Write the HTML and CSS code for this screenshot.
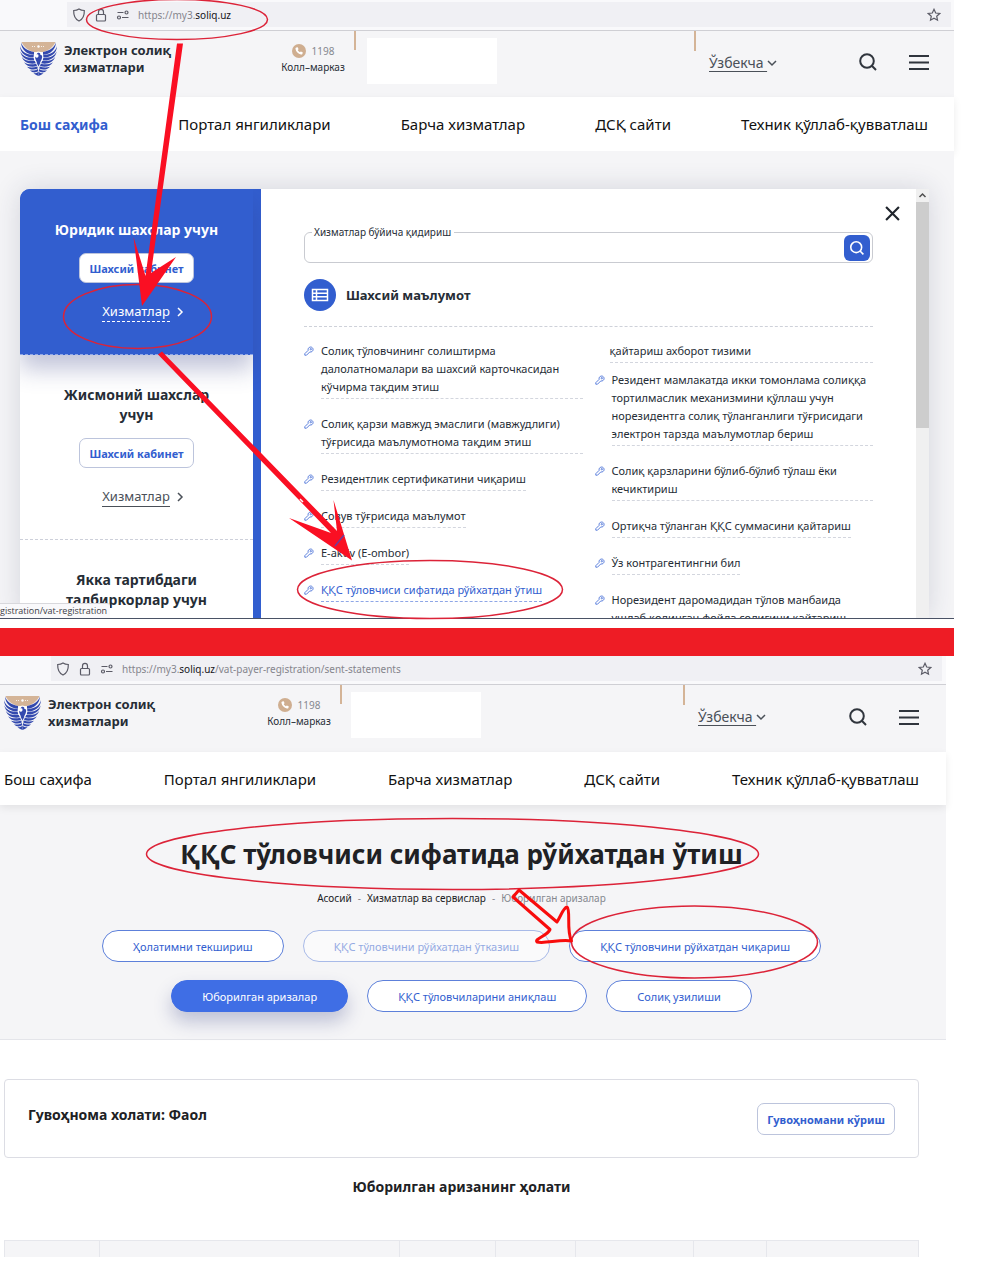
FILE: index.html
```html
<!DOCTYPE html>
<html lang="uz">
<head>
  <meta charset="UTF-8" />
  <meta name="viewport" content="width=device-width, initial-scale=1.0" />
  <title>Электрон солиқ хизматлари</title>
  <link rel="stylesheet" href="styles.css">
</head>
<body>
  <!-- shared icons -->
  <svg class="sprite" aria-hidden="true">
    <symbol id="i-shield" viewBox="0 0 14 14"><path d="M7 1C5.300 2.200 3.500 2.500 1.700 2.500C1.500 7.500 3.300 11.300 7 13C10.700 11.300 12.500 7.500 12.300 2.500C10.500 2.500 8.700 2.200 7 1Z"/></symbol>
    <symbol id="i-lock" viewBox="0 0 14 14"><rect x="2.500" y="6.500" width="9" height="6.500" rx="1"/><path d="M4.500 6.500V4a2.500 2.700 0 0 1 5 0v2.500"/></symbol>
    <symbol id="i-perm" viewBox="0 0 14 14"><path d="M1.500 4.500h6M6 9.500h6.500"/><circle cx="10.500" cy="4.500" r="1.500"/><circle cx="3" cy="9.500" r="1.500"/></symbol>
    <symbol id="i-star" viewBox="0 0 14 14"><path d="M7 1.300l1.700 3.700 4 .5-3 2.700.8 4-3.500-2-3.500 2 .8-4-3-2.700 4-.5z"/></symbol>
    <symbol id="i-search" viewBox="0 0 20 20"><circle cx="9" cy="9" r="6.800"/><path d="M13.800 13.800l4.200 4.200"/></symbol>
    <symbol id="i-key" viewBox="0 0 10 10"><path d="M4.200 4.300a2.500 2.500 0 1 1 1.600 1.600L2.500 9.200H.800V7.700z"/><circle cx="6.800" cy="3.200" r=".7"/></symbol>
    <symbol id="i-phone" viewBox="0 0 14 14"><circle cx="7" cy="7" r="7" fill="#cfae90"/><path d="M4.300 3.500l1.400-.2.900 1.900-.9.900c.4.900 1.300 1.800 2.200 2.200l.9-.9 1.900.9-.2 1.400c-.2.700-.9.900-1.600.8C6.300 10.100 3.900 7.700 3.500 5.100c-.1-.7.100-1.400.8-1.600z" fill="#fff"/></symbol>
    <symbol id="wing" viewBox="0 0 37 34">
      <path d="M1 .500C3 6 8 9 14 10L14 12.700C7 12.500 1.500 8 1 .500Z"/>
      <path d="M0 4C1.500 9.700 6 12.700 13.800 13.100L13.600 15.600C6 15.500 .300 11.500 0 4Z"/>
      <path d="M.300 9.500C2.500 14 7 16 13.700 16L14.300 18.500C7.500 19 1.500 16 .300 9.500Z"/>
      <path d="M1.800 15C5 18.700 9.500 19.500 14.800 18.900L15.800 21.300C9.500 22.500 4 20.500 1.800 15Z"/>
      <path d="M4 20.200C8 22.700 12 22.800 16.200 21.700L17 24C12 25.500 7 24.700 4 20.200Z"/>
      <path d="M7 24.700C11 26 14 25.500 17.300 24.400L17.800 26.600C14 28.300 10 28 7 24.700Z"/>
      <path d="M10 28.300C13 29 15.500 28.300 17.900 27L18.200 29.300C15.500 31 12.500 31 10 28.300Z"/>
      <path d="M13.500 31.300C15.500 31.300 17 30.800 18.500 29.700V34C17 33.500 15.500 32.800 13.500 31.300Z"/>
    </symbol>
    <symbol id="logo" viewBox="0 0 37 34">
      <path d="M1.500 0H35.500C33 5.500 28 9 23 10H14C9 9 4 5.500 1.500 0Z" fill="#d4b497"/>
      <circle cx="18.500" cy="4.500" r="1.200" fill="#fff"/>
      <path d="M12 4.500h4M21 4.500h4" stroke="#fff" stroke-width=".8" stroke-dasharray="1"/>
      <circle cx="18.500" cy="15" r="5.500" fill="#fff"/>
      <g fill="#3349ae">
        <use href="#wing" width="37" height="34"/>
        <use href="#wing" width="37" height="34" transform="matrix(-1 0 0 1 37 0)"/>
        <path d="M17.500 11C19.500 10 20.800 11.500 20.300 13C22 12.500 22.500 14 22 16C21.500 18.500 20 19.500 20 21.500L18.500 24.500L17 21.500C17 19.500 15 18 15 14.500C16 16 17.500 16 18.200 15C18.800 14 18.500 13 18 12.300L16.500 12.500Z"/>
      </g>
    </symbol>
  </svg>

  <section class="screen">
    <div class="address">
      <div class="url">
        <svg class="line"><use href="#i-shield"/></svg>
        <svg class="line"><use href="#i-lock"/></svg>
        <svg class="line"><use href="#i-perm"/></svg>
        <span>https://my3.<b>soliq.uz</b></span>
        <svg class="line star"><use href="#i-star"/></svg>
      </div>
    </div>
    <header class="header">
      <a class="brand" href="#">
        <svg><use href="#logo"/></svg>
        <span>Электрон солиқ<br>хизматлари</span>
      </a>
      <div class="call">
        <span class="phone"><svg><use href="#i-phone"/></svg>1198</span>
        <span>Колл–марказ</span>
      </div>
      <div class="blank"></div>
      <div class="tools">
        <a class="lang" href="#"><u>Ўзбекча&nbsp;</u><svg viewBox="0 0 10 10"><path d="M1 3l4 4 4-4"/></svg></a>
        <button type="button" aria-label="Қидириш"><svg><use href="#i-search"/></svg></button>
        <button type="button" aria-label="Меню"><svg viewBox="0 0 20 20"><path d="M0 4h20M0 10.500h20M0 17h20"/></svg></button>
      </div>
    </header>
    <nav class="nav">
      <a class="current" href="#">Бош саҳифа</a>
      <a href="#">Портал янгиликлари</a>
      <a href="#">Барча хизматлар</a>
      <a href="#">ДСҚ сайти</a>
      <a href="#">Техник қўллаб-қувватлаш</a>
    </nav>
    <main class="stage">
      <div class="services">
        <aside class="side">
          <div class="who active">
            <h2>Юридик шахслар учун</h2>
            <button type="button">Шахсий кабинет</button>
            <a href="#"><span>Хизматлар</span><svg viewBox="0 0 8 10"><path d="M2 1l4 4-4 4"/></svg></a>
          </div>
          <div class="who">
            <h2>Жисмоний шахслар учун</h2>
            <button type="button">Шахсий кабинет</button>
            <a href="#"><span>Хизматлар</span><svg viewBox="0 0 8 10"><path d="M2 1l4 4-4 4"/></svg></a>
          </div>
          <div class="who">
            <h2>Якка тартибдаги тадбиркорлар учун</h2>
          </div>
        </aside>
        <div class="list">
          <button class="close" type="button" aria-label="Ёпиш"><svg viewBox="0 0 14 14"><path d="M1 1l12 12M13 1L1 13"/></svg></button>
          <fieldset class="find">
            <legend><label for="find">Хизматлар бўйича қидириш</label></legend>
            <input id="find" type="text">
            <button type="button" aria-label="Қидириш"><svg><use href="#i-search"/></svg></button>
          </fieldset>
          <h3>
            <svg viewBox="0 0 32 32"><circle cx="16" cy="16" r="16" fill="#325ecf"/><path d="M8.500 10.500h15v11h-15zM8.500 14.200h15M8.500 17.800h15M12.500 10.500v11" fill="none" stroke="#fff" stroke-width="1.500"/></svg>
            Шахсий маълумот
          </h3>
          <div class="cols">
            <ul>
              <li><svg><use href="#i-key"/></svg><a href="#">Солиқ тўловчининг солиштирма далолатномалари ва шахсий карточкасидан кўчирма тақдим этиш</a></li>
              <li><svg><use href="#i-key"/></svg><a href="#">Солиқ қарзи мавжуд эмаслиги (мавжудлиги) тўғрисида маълумотнома тақдим этиш</a></li>
              <li><svg><use href="#i-key"/></svg><a href="#">Резидентлик сертификатини чиқариш</a></li>
              <li><svg><use href="#i-key"/></svg><a href="#">Совув тўғрисида маълумот</a></li>
              <li><svg><use href="#i-key"/></svg><a href="#">E-aktiv (E-ombor)</a></li>
              <li><svg><use href="#i-key"/></svg><a class="hover" href="#">ҚҚС тўловчиси сифатида рўйхатдан ўтиш</a></li>
            </ul>
            <ul>
              <li class="rest"><a href="#">қайтариш ахборот тизими</a></li>
              <li><svg><use href="#i-key"/></svg><a href="#">Резидент мамлакатда икки томонлама солиққа тортилмаслик механизмини қўллаш учун норезидентга солиқ тўланганлиги тўғрисидаги электрон тарзда маълумотлар бериш</a></li>
              <li><svg><use href="#i-key"/></svg><a href="#">Солиқ қарзларини бўлиб-бўлиб тўлаш ёки кечиктириш</a></li>
              <li><svg><use href="#i-key"/></svg><a href="#">Ортиқча тўланган ҚҚС суммасини қайтариш</a></li>
              <li><svg><use href="#i-key"/></svg><a href="#">Ўз контрагентингни бил</a></li>
              <li><svg><use href="#i-key"/></svg><a href="#">Норезидент даромадидан тўлов манбаида ушлаб қолинган фойда солиғини қайтариш</a></li>
            </ul>
          </div>
        </div>
        <div class="scroll"><svg viewBox="0 0 13 13"><path d="M3.500 8l3-3 3 3"/></svg><i></i></div>
      </div>
      <div class="status">gistration/vat-registration</div>
    </main>
  </section>

  <div class="divider"></div>

  <section class="screen second">
    <div class="address">
      <div class="url">
        <svg class="line"><use href="#i-shield"/></svg>
        <svg class="line"><use href="#i-lock"/></svg>
        <svg class="line"><use href="#i-perm"/></svg>
        <span>https://my3.<b>soliq.uz</b>/vat-payer-registration/sent-statements</span>
        <svg class="line star"><use href="#i-star"/></svg>
      </div>
    </div>
    <header class="header">
      <a class="brand" href="#">
        <svg><use href="#logo"/></svg>
        <span>Электрон солиқ<br>хизматлари</span>
      </a>
      <div class="call">
        <span class="phone"><svg><use href="#i-phone"/></svg>1198</span>
        <span>Колл–марказ</span>
      </div>
      <div class="blank"></div>
      <div class="tools">
        <a class="lang" href="#"><u>Ўзбекча&nbsp;</u><svg viewBox="0 0 10 10"><path d="M1 3l4 4 4-4"/></svg></a>
        <button type="button" aria-label="Қидириш"><svg><use href="#i-search"/></svg></button>
        <button type="button" aria-label="Меню"><svg viewBox="0 0 20 20"><path d="M0 4h20M0 10.500h20M0 17h20"/></svg></button>
      </div>
    </header>
    <nav class="nav">
      <a href="#">Бош саҳифа</a>
      <a href="#">Портал янгиликлари</a>
      <a href="#">Барча хизматлар</a>
      <a href="#">ДСҚ сайти</a>
      <a href="#">Техник қўллаб-қувватлаш</a>
    </nav>
    <div class="hero">
      <h1>ҚҚС тўловчиси сифатида рўйхатдан ўтиш</h1>
      <div class="crumbs"><a href="#">Асосий</a><span>-</span><a href="#">Хизматлар ва сервислар</a><span>-</span><span>Юборилган аризалар</span></div>
      <div class="pills">
        <button type="button">Ҳолатимни текшириш</button>
        <button type="button" disabled>ҚҚС тўловчини рўйхатдан ўтказиш</button>
        <button type="button">ҚҚС тўловчини рўйхатдан чиқариш</button>
      </div>
      <div class="pills">
        <button class="on" type="button">Юборилган аризалар</button>
        <button type="button">ҚҚС тўловчиларини аниқлаш</button>
        <button type="button">Солиқ узилиши</button>
      </div>
    </div>
    <div class="content">
      <div class="panel">
        <h2>Гувоҳнома холати: Фаол</h2>
        <button type="button">Гувоҳномани кўриш</button>
      </div>
      <h2>Юборилган аризанинг ҳолати</h2>
      <table>
        <colgroup><col style="width:10.4%"><col style="width:32.8%"><col style="width:10.5%"><col style="width:8.8%"><col style="width:12.9%"><col style="width:8%"><col></colgroup>
        <thead><tr><th></th><th></th><th></th><th></th><th></th><th></th><th></th></tr></thead>
      </table>
    </div>
  </section>

  <!-- red circles and arrows over both screens -->
  <svg class="marks" width="983" height="1280" viewBox="0 0 983 1280" aria-hidden="true">
    <g fill="none" stroke="#dc2338" stroke-width="1.500">
      <ellipse cx="177" cy="19.500" rx="90.500" ry="20"/>
      <ellipse cx="137.500" cy="316.500" rx="74" ry="32"/>
      <ellipse cx="430" cy="589.500" rx="132.500" ry="29"/>
      <ellipse cx="452.500" cy="854" rx="306" ry="35.500"/>
      <ellipse cx="694.500" cy="942" rx="123" ry="36"/>
    </g>
    <g fill="#fa0f23">
      <path d="M177 43.500h6L151 273L176 257L142 306L133.500 237L145.500 276Z"/>
      <path d="M158 354.500L162 351.500L337 531L333.500 500L352 560.500L289 518L331 533Z"/>
    </g>
    <path d="M296 501l3 3M300 499l3 3" stroke="#fff" stroke-width="1.500"/>
    <path d="M335 546l9-11" stroke="#6b3f9e" stroke-width="1.500"/>
    <path d="M519 890L557 922C561 916 563 908 567 907C571 910 566 930 571.500 941C560 939 545 944 537 942C534 939 547 936 550 929.500L513 897Z" fill="none" stroke="#f80c0c" stroke-width="3" stroke-linejoin="round"/>
  </svg>
</body>
</html>
```
FILE: styles.css
```css
* {
  box-sizing: border-box;
}
body {
  margin: 0;
  padding: 0 29px 24px 0;
  position: relative;
  overflow-x: hidden;
  font-family: "Noto Sans", "Open Sans", sans-serif;
  font-size: 12px;
  color: #262d36;
  background: #fff;
}
a {
  color: inherit;
  text-decoration: none;
}
button {
  font: inherit;
  cursor: pointer;
}
h1, h2, h3, ul {
  margin: 0;
  padding: 0;
}
svg {
  flex: none;
}
.sprite {
  position: absolute;
  width: 0;
  height: 0;
}
.marks {
  position: absolute;
  top: 0;
  left: 0;
  pointer-events: none;
}

/* address bar */
.address {
  height: 31px;
  padding: 2px 3px 3px 67px;
  background: #f9f9fb;
  border-bottom: 1px solid #cfcfd4;
}
.url {
  display: flex;
  align-items: center;
  gap: 8px;
  height: 25px;
  padding: 0 10px 0 5px;
  background: #f0f0f4;
  font-size: 10px;
  color: #85858d;
}
.url b {
  font-weight: normal;
  color: #15141a;
}
.line {
  width: 14px;
  height: 14px;
  fill: none;
  stroke: #5b5b66;
  stroke-width: 1.2;
}
.star {
  margin-left: auto;
}

/* header */
.header {
  display: grid;
  grid-template-columns: 261px 75px 1fr 235px;
  height: 66px;
  padding: 0 25px 0 20px;
  background: #f5f5f7;
}
.brand {
  display: flex;
  gap: 7px;
  padding-top: 11px;
  font-size: 13px;
  font-weight: bold;
  line-height: 17px;
}
.brand svg {
  width: 37px;
  height: 34px;
}
.call {
  padding-top: 12px;
  padding-right: 11px;
  font-size: 10px;
  line-height: 16px;
  text-align: center;
  white-space: nowrap;
  background: linear-gradient(#d4b497, #d4b497) no-repeat right top / 2px 19px;
}
.call span {
  display: block;
}
.call .phone {
  display: flex;
  justify-content: center;
  align-items: center;
  gap: 6px;
  color: #85888f;
}
.phone svg {
  width: 14px;
  height: 14px;
}
.blank {
  width: 130px;
  height: 46px;
  margin: 7px 0 0 11px;
  background: #fff;
}
.tools {
  display: flex;
  align-items: center;
  gap: 31px;
  padding: 0 0 4px 15px;
  background: linear-gradient(#d4b497, #d4b497) no-repeat left top / 2px 20px;
}
.lang {
  margin-right: auto;
  font-size: 14px;
  color: #4a5058;
}
.lang u {
  text-underline-offset: 3px;
}
.lang svg {
  width: 10px;
  height: 10px;
  fill: none;
  stroke: #4a5058;
  stroke-width: 1.5;
}
.tools button {
  display: flex;
  padding: 0;
  border: 0;
  background: none;
}
.tools button svg {
  width: 20px;
  height: 20px;
  fill: none;
  stroke: #30353d;
  stroke-width: 2;
}
.nav {
  display: flex;
  justify-content: space-between;
  align-items: center;
  position: relative;
  height: 54px;
  padding: 0 26px 0 20px;
  background: #fff;
  box-shadow: 0 3px 8px rgba(0, 0, 0, .08);
  font-size: 15px;
  color: #111;
  white-space: nowrap;
}
.nav .current {
  font-size: 14px;
  font-weight: bold;
  color: #325ecf;
}

/* services menu */
.stage {
  position: relative;
  padding: 38px 25px 0 20px;
  overflow: hidden;
  background: #f5f5f7;
  border-bottom: 1px solid #4a5265;
}
.services {
  display: flex;
  height: 429px;
  border-radius: 10px 0 0 0;
  background: #fff;
  box-shadow: 0 0 28px rgba(40, 45, 80, .16);
}
.side {
  flex: none;
  width: 241px;
  padding-right: 8px;
  overflow: hidden;
  border-radius: 10px 0 0 0;
  background: #325ecf;
}
.who {
  padding: 30px 30px 32px;
  background: #fff;
  border-bottom: 1px dashed #cdd0da;
  text-align: center;
}
.who h2 {
  font-size: 14px;
  line-height: 20px;
}
.who button {
  height: 30px;
  margin: 13px 0 18px;
  padding: 0 9px;
  border: 1px solid #bcc4dc;
  border-radius: 7px;
  background: #fff;
  font-size: 11px;
  font-weight: bold;
  color: #325ecf;
}
.who a {
  display: flex;
  justify-content: center;
  align-items: center;
  gap: 6px;
  padding-left: 13px;
  font-size: 13px;
  line-height: 20px;
  color: #4a5058;
}
.who a span {
  border-bottom: 1px solid #4a5058;
}
.who a svg {
  width: 8px;
  height: 10px;
  fill: none;
  stroke: currentColor;
  stroke-width: 1.5;
}
.active {
  position: relative;
  padding-top: 31px;
  background: #325ecf;
  border-color: #8ea6e6;
  box-shadow: 0 14px 22px rgba(50, 60, 130, .3);
}
.active h2,
.active a {
  color: #fff;
}
.active a span {
  border-bottom: 1px dashed #fff;
}
.list {
  position: relative;
  flex: 1;
  min-width: 0;
  padding: 36px 43px 0;
  overflow: hidden;
}
.close {
  position: absolute;
  top: 17px;
  right: 16px;
  width: 15px;
  height: 15px;
  padding: 0;
  border: 0;
  background: none;
}
.close svg {
  display: block;
  fill: none;
  stroke: #20252c;
  stroke-width: 2;
}
.find {
  display: flex;
  height: 38px;
  margin: 0;
  padding: 0 2px 2px 7px;
  border: 1px solid #c9cbd1;
  border-radius: 6px;
}
.find legend {
  padding: 0 3px 0 2px;
  font-size: 10px;
  line-height: 14px;
}
.find input {
  flex: 1;
  min-width: 0;
  height: 22px;
  border: 0;
  outline: none;
  background: none;
}
.find button {
  width: 26px;
  height: 26px;
  margin-top: -4px;
  padding: 5px;
  border: 0;
  border-radius: 6px;
  background: #325ecf;
}
.find button svg {
  display: block;
  width: 16px;
  height: 16px;
  fill: none;
  stroke: #fff;
  stroke-width: 2;
}
.list h3 {
  display: flex;
  align-items: center;
  gap: 10px;
  padding: 16px 0 15px;
  border-bottom: 1px dashed #ced1d9;
  font-size: 13px;
}
.list h3 svg {
  width: 32px;
  height: 32px;
}
.cols {
  display: grid;
  grid-template-columns: 1fr 1fr;
  gap: 12px;
  padding-top: 15px;
}
.cols li {
  display: flex;
  align-items: flex-start;
  gap: 7px;
  margin-bottom: 16px;
  font-size: 11px;
  line-height: 18px;
}
.cols li.rest {
  margin-bottom: 8px;
  padding-left: 15px;
}
.rest a {
  flex: 1;
}
.cols a {
  padding-bottom: 2px;
  border-bottom: 1px dashed #d3d6de;
}
.cols a.hover {
  color: #325ecf;
  border-color: #8ea6e6;
}
.cols svg {
  width: 10px;
  height: 10px;
  margin-top: 4px;
  fill: none;
  stroke: #5b7fdc;
}
.scroll {
  flex: none;
  width: 13px;
  background: #f0f0f0;
}
.scroll svg {
  display: block;
  fill: none;
  stroke: #505050;
  stroke-width: 1.5;
}
.scroll i {
  display: block;
  height: 226px;
  background: #cdcdcd;
}
.status {
  position: absolute;
  left: 0;
  bottom: 0;
  padding-right: 3px;
  border-top: 1px solid #d8d8dc;
  border-radius: 0 3px 0 0;
  background: #f9f9fb;
  font-family: "Open Sans", sans-serif;
  font-size: 9px;
  line-height: 14px;
  color: #3c3c44;
}
.divider {
  height: 28px;
  margin-top: 9px;
  background: #ee1c25;
}

/* second screen */
.second {
  margin-right: 8px;
}
.second .address {
  height: 29px;
  padding: 0 4px 2px 51px;
}
.second .header {
  height: 67px;
  padding: 0 27px 0 4px;
  grid-template-columns: 263px 75px 1fr 236px;
}
.second .blank {
  margin-left: 9px;
}
.second .nav {
  height: 53px;
  padding: 0 27px 0 4px;
}
.hero {
  padding: 28px 27px 27px 4px;
  background: #f5f5f7;
  border-bottom: 1px solid #e4e5ea;
  text-align: center;
}
.hero h1 {
  font-size: 26px;
  line-height: 42px;
  color: #202124;
}
.crumbs {
  display: flex;
  justify-content: center;
  gap: 6px;
  margin: 14px 0 23px;
  font-size: 10px;
  line-height: 18px;
  color: #85888f;
}
.crumbs a {
  color: #202124;
}
.pills {
  display: flex;
  justify-content: center;
  gap: 19px;
}
.pills + .pills {
  margin-top: 18px;
}
.pills button {
  height: 32px;
  padding: 0 30px;
  border: 1px solid #5d80da;
  border-radius: 16px;
  background: #fff;
  font-size: 11px;
  color: #325ecf;
}
.pills button:disabled {
  opacity: .5;
}
.pills .on {
  border-color: #3f6ee5;
  background: #3f6ee5;
  box-shadow: 0 10px 18px rgba(50, 60, 130, .28);
  color: #fff;
}
.content {
  padding: 39px 27px 0 4px;
}
.content h2 {
  font-size: 14px;
  line-height: 20px;
  color: #202124;
}
.content > h2 {
  margin: 19px 0 43px;
  text-align: center;
}
.panel {
  display: flex;
  justify-content: space-between;
  align-items: flex-start;
  padding: 23px 23px 22px;
  border: 1px solid #dcdde4;
  border-radius: 4px;
}
.panel h2 {
  padding-top: 2px;
}
.panel button {
  height: 32px;
  padding: 0 9px;
  border: 1px solid #bcc4dc;
  border-radius: 7px;
  background: #fff;
  font-size: 11px;
  font-weight: bold;
  color: #325ecf;
}
table {
  width: 100%;
  table-layout: fixed;
  border-collapse: collapse;
  background: #f5f5f7;
}
th {
  height: 16px;
  padding: 0;
  border: 1px solid #e6e7ec;
  border-bottom: 0;
}
```
